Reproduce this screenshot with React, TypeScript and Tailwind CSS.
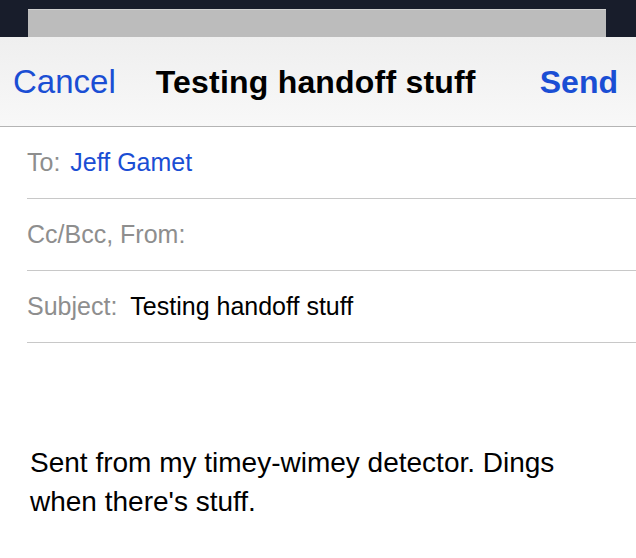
export default function App() {
  const font = { fontFamily: '"Liberation Sans", Arial, sans-serif' };

  return (
    <div className="w-[636px] h-[558px] overflow-hidden bg-white" style={font}>
      {/* dimmed backdrop with the card behind the sheet */}
      <div className="h-[37px] bg-[#181d2b] pt-[9px] pl-[28px] pr-[30px]">
        <div className="h-[28px] bg-[#bcbcbc] border-t border-[#d0d0d0]" />
      </div>

      <header className="h-[90px] flex items-center pl-[13px] pr-[18px] bg-gradient-to-b from-[#efefef] to-[#f8f8f8] border-b border-[#b4b4b4]">
        <button className="text-[33px] text-[#1a4ed4] leading-none">Cancel</button>
        <h1 className="ml-[40px] text-[32px] font-bold text-black leading-none tracking-[0.2px]">
          Testing handoff stuff
        </h1>
        <button className="ml-auto text-[32px] font-bold text-[#1a4ed4] leading-none">Send</button>
      </header>

      <div className="ml-[27px]">
        <div className="h-[72px] flex items-center border-b border-[#c8c8c8] text-[25px]">
          <span className="text-[#8e8e8e]">To:</span>
          <span className="ml-[10px] text-[#1a4ed4]">Jeff Gamet</span>
        </div>
        <div className="h-[72px] flex items-center border-b border-[#c8c8c8] text-[25px]">
          <span className="text-[#8e8e8e]">Cc/Bcc, From:</span>
        </div>
        <div className="h-[72px] flex items-center border-b border-[#c8c8c8] text-[25px]">
          <span className="text-[#8e8e8e]">Subject:</span>
          <span className="ml-[13px] text-black">Testing handoff stuff</span>
        </div>
      </div>

      <div className="pl-[30px] pr-[40px] pt-[100px] text-[28px] leading-[39px] text-black">
        Sent from my timey-wimey detector. Dings when there's stuff.
      </div>
    </div>
  );
}
